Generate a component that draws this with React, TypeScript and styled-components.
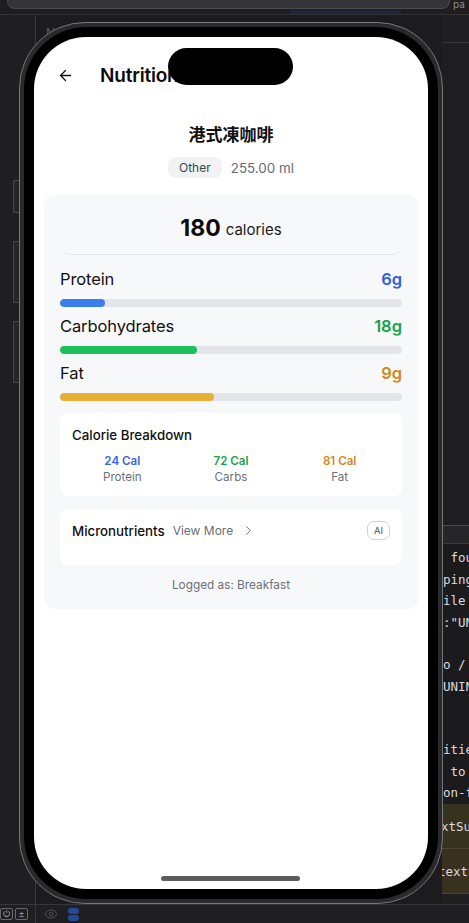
import React from "react";
import styled, { createGlobalStyle } from "styled-components";
import { ArrowLeft, ChevronRight, Eye } from "lucide-react";

const Global = createGlobalStyle`
  html, body { margin: 0; padding: 0; background: #1d1d1f; }
  body { width: 469px; height: 923px; overflow: hidden; font-family: Inter, "Noto Sans", sans-serif; }
  * { box-sizing: border-box; }
`;

const Desktop = styled.div`
  position: relative;
  width: 469px;
  height: 923px;
  display: flex;
  flex-direction: column;
  background: #1e1e20;
  overflow: hidden;
`;

const TopStrip = styled.div`
  height: 15px;
  display: flex;
  align-items: flex-start;
  padding-left: 7px;
  border-bottom: 1px solid #333336;
  position: relative;
  overflow: hidden;
`;

const TabBar = styled.div`
  flex: none;
  width: 443px;
  height: 9px;
  background: #353538;
  border: 1px solid #4a4a4d;
  border-top: none;
  border-radius: 0 0 8px 8px;
`;

const TabText = styled.span`
  font-size: 10px;
  color: #8a8a8e;
  margin-left: 3px;
  line-height: 8px;
  white-space: nowrap;
`;

const BlueTab = styled.div`
  position: absolute;
  left: 290px;
  top: 10px;
  width: 111px;
  height: 5px;
  background: #1b2638;
`;

const Middle = styled.div`
  flex: 1;
  display: flex;
`;

const LeftRail = styled.div`
  width: 36px;
  border-right: 1px solid #38383b;
  background: #1f1f21;
`;

const Center = styled.div`
  flex: 1;
  background: #1c1c1e;
  padding: 10px 0 0 10px;
`;

const FaintLabel = styled.div`
  font-size: 12px;
  color: #5a5a5e;
`;

const RightPanel = styled.div`
  width: 27px;
  display: flex;
  flex-direction: column;
  background: #1f1f21;
  overflow: hidden;
`;

const RightTop = styled.div`
  height: 28px;
  border-bottom: 1px solid #38383b;
`;

const RightFill = styled.div`
  height: 483px;
  background: #1e1e20;
  border-bottom: 1px solid #4a4a4e;
`;

const RightHeader = styled.div`
  height: 18px;
  background: #262628;
  border-bottom: 1px solid #3a3a3d;
`;

const Code = styled.div`
  display: flex;
  flex-direction: column;
  padding-top: 3px;
  background: #1b1b1d;
  height: 260px;
`;

const CodeLine = styled.div`
  height: 21.7px;
  line-height: 21.7px;
  font-family: "DejaVu Sans Mono", "Liberation Mono", monospace;
  font-size: 12.5px;
  color: #dcdcdc;
  white-space: pre;
  margin-left: 1px;
`;

const HiRow = styled.div<{ $shift?: number }>`
  height: 45px;
  background: #37311f;
  border-bottom: 1px solid #4c4535;
  display: flex;
  align-items: center;
  font-family: "DejaVu Sans Mono", "Liberation Mono", monospace;
  font-size: 12.5px;
  color: #dcdcdc;
  white-space: pre;
  margin-left: ${(p) => p.$shift ?? 0}px;
`;

const BottomBar = styled.div`
  height: 19px;
  display: flex;
  align-items: center;
  background: #1f1f21;
  border-top: 1px solid #38383b;
`;

const BottomLeft = styled.div`
  width: 36px;
  height: 100%;
  display: flex;
  align-items: center;
  gap: 2px;
  border-right: 1px solid #38383b;
`;

const MiniBtn = styled.div`
  width: 13px;
  height: 12px;
  border: 1px solid #6a6a6e;
  border-radius: 2px;
  font-size: 9px;
  color: #9a9a9e;
  display: flex;
  align-items: center;
  justify-content: center;
  font-family: "DejaVu Sans Mono", monospace;
`;

const BottomIcons = styled.div`
  display: flex;
  align-items: center;
  gap: 10px;
  padding-left: 8px;
  color: #55555a;
`;

const Toggle = styled.div`
  width: 11px;
  height: 13px;
  display: flex;
  flex-direction: column;
  gap: 1px;
  & > span {
    flex: 1;
    border-radius: 3px;
    background: #234a9a;
  }
`;

/* Phone */

const Phone = styled.div`
  position: absolute;
  left: 19px;
  top: 22px;
  width: 424px;
  height: 882px;
  border-radius: 66px;
  background: #2a2a2c;
  border: 1px solid #77777b;
  padding: 4px;
`;

const Bezel = styled.div`
  width: 100%;
  height: 100%;
  background: #000;
  border-radius: 62px;
  padding: 10px;
`;

const SideButton = styled.div<{ $top: number; $h: number }>`
  position: absolute;
  left: -7px;
  top: ${(p) => p.$top}px;
  width: 6px;
  height: ${(p) => p.$h}px;
  background: #262628;
  border: 1px solid #48484c;
  border-right: none;
  border-radius: 2px 0 0 2px;
`;

const Screen = styled.div`
  position: relative;
  width: 100%;
  height: 100%;
  background: #fff;
  border-radius: 52px;
  overflow: hidden;
  display: flex;
  flex-direction: column;
  align-items: stretch;
`;

const Island = styled.div`
  position: absolute;
  left: 134px;
  top: 11px;
  width: 125px;
  height: 37px;
  border-radius: 19px;
  background: #000;
`;

const HomeIndicator = styled.div`
  position: absolute;
  left: 127px;
  bottom: 8px;
  width: 139px;
  height: 5px;
  border-radius: 3px;
  background: #5c5c5e;
`;

const Header = styled.div`
  display: flex;
  align-items: center;
  height: 26px;
  margin-top: 25px;
  padding-left: 23px;
  gap: 26px;
  color: #111;
`;

const Title = styled.div`
  font-size: 19px;
  font-weight: 600;
  letter-spacing: -0.2px;
  color: #0b0b0b;
  white-space: nowrap;
`;

const FoodName = styled.div`
  margin-top: 36px;
  text-align: center;
  font-family: Inter, "Noto Sans CJK TC", sans-serif;
  font-size: 17px;
  font-weight: 700;
  color: #111;
  line-height: 22px;
`;

const MetaRow = styled.div`
  margin-top: 11px;
  display: flex;
  justify-content: center;
  align-items: center;
  gap: 9px;
`;

const Chip = styled.span`
  background: #f1f2f4;
  border-radius: 8px;
  height: 21px;
  padding: 0 11px;
  display: inline-flex;
  align-items: center;
  font-size: 12px;
  color: #3f4348;
`;

const Amount = styled.span`
  font-size: 13.4px;
  color: #666b73;
`;

const Card = styled.div`
  margin: 17px 10px 0;
  background: #f7f8fa;
  border-radius: 10px;
  padding: 13px 16px 16px;
  display: flex;
  flex-direction: column;
`;

const CalBox = styled.div`
  height: 47px;
  border-bottom: 1px solid #e3e4e8;
  border-radius: 0 0 10px 10px;
  display: flex;
  align-items: center;
  justify-content: center;
  gap: 5px;
  padding-bottom: 7px;
`;

const CalNum = styled.span`
  font-size: 23px;
  font-weight: 700;
  color: #0b0b0b;
`;

const CalUnit = styled.span`
  font-size: 15px;
  color: #1a1a1a;
  margin-top: 3px;
`;

const Macros = styled.div`
  margin-top: 13px;
  display: flex;
  flex-direction: column;
`;

const MacroBlock = styled.div`
  display: flex;
  flex-direction: column;
  padding-bottom: 8px;
`;

const MacroHead = styled.div`
  height: 22px;
  display: flex;
  justify-content: space-between;
  align-items: center;
`;

const MacroName = styled.span`
  font-size: 16.5px;
  color: #111;
  letter-spacing: -0.1px;
`;

const MacroValue = styled.span<{ $c: string }>`
  font-size: 16.5px;
  font-weight: 600;
  color: ${(p) => p.$c};
`;

const Track = styled.div`
  margin-top: 9px;
  height: 8px;
  border-radius: 4px;
  background: #e4e5ea;
  overflow: hidden;
`;

const Fill = styled.div<{ $c: string }>`
  height: 100%;
  border-radius: 4px;
  background: ${(p) => p.$c};
`;

const WhiteCard = styled.div`
  background: #fff;
  border-radius: 8px;
  padding: 12px 12px;
`;

const BreakdownCard = styled(WhiteCard)`
  margin-top: 4px;
  height: 83px;
`;

const CardTitle = styled.div`
  font-size: 13.3px;
  font-weight: 500;
  color: #111;
  line-height: 20px;
  white-space: nowrap;
`;

const BreakGrid = styled.div`
  margin: 8px -4px 0;
  display: grid;
  grid-template-columns: repeat(3, 1fr);
`;

const BreakCol = styled.div`
  display: flex;
  flex-direction: column;
  align-items: center;
`;

const BreakVal = styled.span<{ $c: string }>`
  font-size: 11.6px;
  font-weight: 600;
  color: ${(p) => p.$c};
  line-height: 16px;
`;

const BreakLabel = styled.span`
  font-size: 11.6px;
  color: #6b7079;
  line-height: 16px;
`;

const MicroCard = styled(WhiteCard)`
  margin-top: 13px;
  height: 56px;
  padding-top: 11px;
`;

const MicroRow = styled.div`
  display: flex;
  align-items: center;
  height: 21px;
`;

const ViewMore = styled.span`
  margin-left: 8px;
  font-size: 12px;
  color: #6b7079;
`;

const Chev = styled.span`
  margin-left: 8px;
  display: inline-flex;
  color: #6b7079;
`;

const AIBadge = styled.span`
  margin-left: auto;
  width: 23px;
  height: 19px;
  border: 1px solid #cfd3d9;
  border-radius: 7px;
  display: inline-flex;
  align-items: center;
  justify-content: center;
  font-size: 9.5px;
  color: #4b4f56;
`;

const Logged = styled.div`
  margin-top: 12px;
  text-align: center;
  font-size: 11.8px;
  color: #6b7079;
  line-height: 16px;
`;

const macros = [
  { name: "Protein", value: "6g", color: "#2f5fe3", bar: "#3b7de9", pct: 13.2 },
  { name: "Carbohydrates", value: "18g", color: "#16a34a", bar: "#1bbf5b", pct: 40 },
  { name: "Fat", value: "9g", color: "#cf8a1e", bar: "#e9ae34", pct: 45 },
];

const breakdown = [
  { v: "24 Cal", l: "Protein", c: "#3466e6" },
  { v: "72 Cal", l: "Carbs", c: "#1d9f4c" },
  { v: "81 Cal", l: "Fat", c: "#d2891c" },
];

const codeLines = [" fou", "ping", "ile", ":\"UN", "", "o /", "UNIN", "", "", "itie", " to", "on-f"];

export default function App() {
  return (
    <>
      <Global />
      <Desktop>
        <TopStrip>
          <TabBar />
          <TabText>pa</TabText>
          <BlueTab />
        </TopStrip>
        <Middle>
          <LeftRail />
          <Center>
            <FaintLabel>Ne</FaintLabel>
          </Center>
          <RightPanel>
            <RightTop />
            <RightFill />
            <RightHeader />
            <Code>
              {codeLines.map((t, i) => (
                <CodeLine key={i}>{t}</CodeLine>
              ))}
            </Code>
            <HiRow $shift={-1}>xtSu</HiRow>
            <HiRow $shift={-4}>textSu</HiRow>
          </RightPanel>
        </Middle>
        <BottomBar>
          <BottomLeft>
            <MiniBtn>⏻</MiniBtn>
            <MiniBtn>±</MiniBtn>
          </BottomLeft>
          <BottomIcons>
            <Eye size={14} strokeWidth={1.6} />
            <Toggle>
              <span />
              <span />
            </Toggle>
          </BottomIcons>
        </BottomBar>

        <Phone>
          <SideButton $top={157} $h={33} />
          <SideButton $top={218} $h={62} />
          <SideButton $top={298} $h={62} />
          <Bezel>
            <Screen>
              <Header>
                <ArrowLeft size={17} strokeWidth={1.8} />
                <Title>Nutrition Details</Title>
              </Header>
              <FoodName>港式凍咖啡</FoodName>
              <MetaRow>
                <Chip>Other</Chip>
                <Amount>255.00 ml</Amount>
              </MetaRow>
              <Card>
                <CalBox>
                  <CalNum>180</CalNum>
                  <CalUnit>calories</CalUnit>
                </CalBox>
                <Macros>
                  {macros.map((m) => (
                    <MacroBlock key={m.name}>
                      <MacroHead>
                        <MacroName>{m.name}</MacroName>
                        <MacroValue $c={m.color}>{m.value}</MacroValue>
                      </MacroHead>
                      <Track>
                        <Fill $c={m.bar} style={{ width: `${m.pct}%` }} />
                      </Track>
                    </MacroBlock>
                  ))}
                </Macros>
                <BreakdownCard>
                  <CardTitle>Calorie Breakdown</CardTitle>
                  <BreakGrid>
                    {breakdown.map((b) => (
                      <BreakCol key={b.l}>
                        <BreakVal $c={b.c}>{b.v}</BreakVal>
                        <BreakLabel>{b.l}</BreakLabel>
                      </BreakCol>
                    ))}
                  </BreakGrid>
                </BreakdownCard>
                <MicroCard>
                  <MicroRow>
                    <CardTitle>Micronutrients</CardTitle>
                    <ViewMore>View More</ViewMore>
                    <Chev>
                      <ChevronRight size={15} strokeWidth={1.6} />
                    </Chev>
                    <AIBadge>AI</AIBadge>
                  </MicroRow>
                </MicroCard>
                <Logged>Logged as: Breakfast</Logged>
              </Card>
              <Island />
              <HomeIndicator />
            </Screen>
          </Bezel>
        </Phone>
      </Desktop>
    </>
  );
}
